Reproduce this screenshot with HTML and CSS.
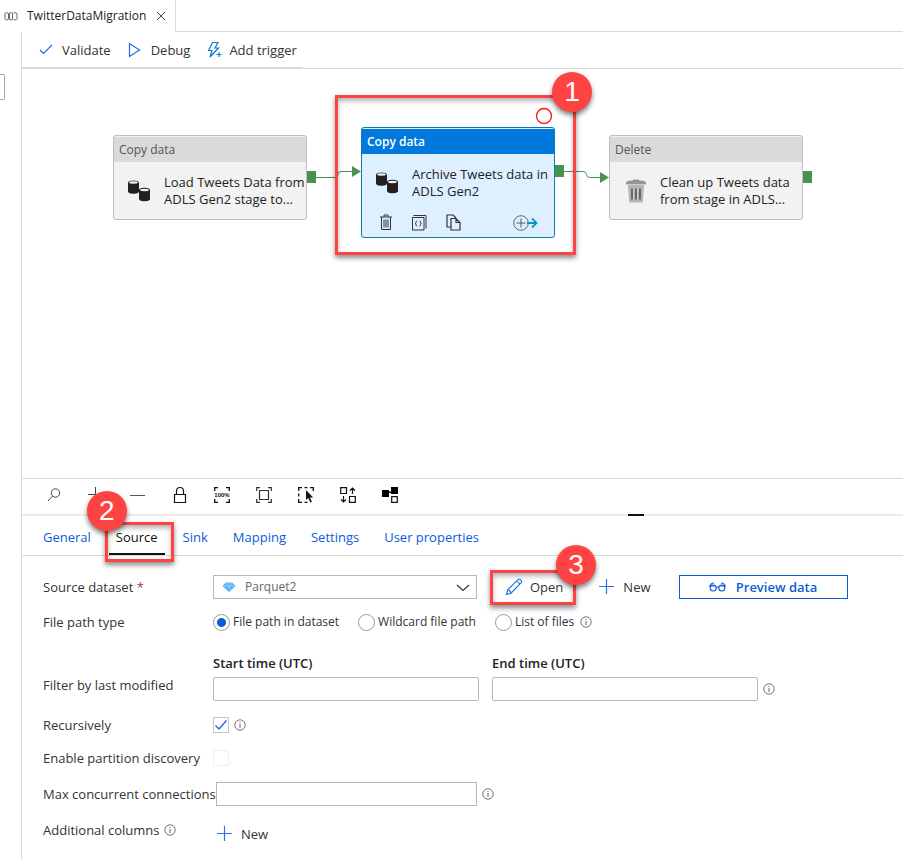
FILE: index.html
```html
<!DOCTYPE html>
<html lang="en">
<head>
<meta charset="utf-8">
<title>TwitterDataMigration</title>
<link rel="stylesheet" href="styles.css">
</head>
<body>
<svg class="defs" aria-hidden="true">
  <symbol id="info" viewBox="0 0 12 12"><circle cx="6" cy="6" r="5.2" fill="none" stroke="#666" stroke-width=".9"/><path d="M6 5v4M6 3v1" stroke="#666" stroke-width="1"/></symbol>
  <symbol id="plus" viewBox="0 0 16 16"><path d="M0 7.5h15M7.5 0v15" stroke="#2f74e0" stroke-width="1.2" fill="none"/></symbol>
  <symbol id="cylinders" viewBox="0 0 22 22">
    <g fill="#231f20"><path d="M0 2.500C0-.3 11-.3 11 2.500v9c0 3-11 3-11 0z"/></g>
    <ellipse cx="5.500" cy="2.500" rx="4.400" ry="1.200" fill="#eee"/>
    <path d="M11 10c0-3 11-3 11 0v9c0 3-11 3-11 0z" fill="#231f20"/>
    <ellipse cx="16.500" cy="10" rx="4.400" ry="1.200" fill="#eee"/>
  </symbol>
</svg>

<header class="tabbar">
  <div class="doc-tab">
    <svg width="14" height="9" viewBox="0 0 14 9" fill="none" stroke="#666"><rect x="1" y=".8" width="3.500" height="7" rx="1.200"/><rect x="5.500" y=".8" width="3" height="7" rx=".5"/><path d="M9.500.8h2q1.500 0 1.500 1.200v4.600q0 1.200-1.500 1.200h-2"/></svg>
    <span>TwitterDataMigration</span>
    <button class="close" aria-label="Close"><svg width="10" height="10" viewBox="0 0 10 10"><path d="M1 1l8 8M9 1L1 9" stroke="#444" fill="none"/></svg></button>
  </div>
</header>

<div class="workspace">
  <aside class="rail"><button class="rail-handle" aria-label="Expand"></button></aside>
  <main class="main">
    <div class="toolbar">
      <div class="toolbar-group">
        <button><svg width="14" height="14" viewBox="0 0 14 14"><path d="M1 7l3.500 3.500L13 2" stroke="#1f6be0" stroke-width="1.200" fill="none"/></svg>Validate</button>
        <button class="debug"><svg width="14" height="16" viewBox="0 0 14 16"><path d="M1.500 1.500v13L11.500 8z" stroke="#1f6be0" stroke-width="1.200" fill="none"/></svg>Debug</button>
        <button class="trigger"><svg width="16" height="18" viewBox="0 0 16 18" fill="none" stroke="#0f7ad8" stroke-width="1.200"><path d="M5.500 1.500h5.500L8 7h3.500L3 16l2-6.500H1.500zM12 11v5M9.500 13.500h5"/></svg>Add trigger</button>
      </div>
    </div>

    <section class="canvas" aria-label="Pipeline">
      <article class="node node-load">
        <h2>Copy data</h2>
        <div class="node-body"><svg width="22" height="22"><use href="#cylinders"/></svg><p>Load Tweets Data from<br>ADLS Gen2 stage to...</p></div>
      </article>
      <article class="node node-archive">
        <h2>Copy data</h2>
        <div class="node-body"><svg width="22" height="22"><use href="#cylinders"/></svg><p>Archive Tweets data in<br>ADLS Gen2</p></div>
        <div class="node-actions">
          <button aria-label="Delete"><svg width="14" height="17" viewBox="0 0 14 17" fill="none" stroke="#333"><path d="M1 3h12M5 3V1h4v2M2.500 3v12.500h9V3M5 5.500v8M7 5.500v8M9 5.500v8"/></svg></button>
          <button aria-label="Code"><svg width="15" height="17" viewBox="0 0 15 17" fill="none" stroke="#333"><path d="M.5 3.500h11.500v12.500H.5zM1.500 1.500h12.500v13" /><path d="M5 7q-1.200 0-1 1.500 0 1-.8 1 .8 0 .8 1-.2 1.500 1 1.500M7.500 7q1.200 0 1 1.500 0 1 .8 1-.8 0-.8 1 .2 1.500-1 1.500"/></svg></button>
          <button aria-label="Copy"><svg width="16" height="17" viewBox="0 0 16 17" fill="none" stroke="#333" stroke-width="1.200"><path d="M5 13H1V1h6l3 3M5 4.500h5l4 4V16H5zM10 4.500v4h4"/></svg></button>
          <button class="add-output" aria-label="Add output"><svg width="25" height="16" viewBox="0 0 25 16" fill="none"><circle cx="8" cy="8" r="7.300" stroke="#667"/><path d="M3.500 8h9M8 3.500v9" stroke="#556"/><path d="M14 8h9.500M19 3.500L23.500 8 19 12.500" stroke="#0795c8" stroke-width="1.800"/></svg></button>
        </div>
      </article>
      <article class="node node-delete">
        <h2>Delete</h2>
        <div class="node-body"><svg width="22" height="24" viewBox="0 0 22 24"><path d="M3 6h16l-1 16q0 1.500-2 1.500H6q-2 0-2-1.500z" fill="#b5b5b5"/><path d="M8 2.500V1h6v1.500M1.500 5V3.200L4 2h14l2.500 1.200V5z" fill="#9b9b9b" stroke="#888" stroke-width=".7"/><path d="M7 9.500v11M11 9.500v11M15 9.500v11" stroke="#666" stroke-width="2"/><path d="M8.500 9.500v11M12.500 9.500v11" stroke="#ddd" stroke-width=".7"/></svg><p>Clean up Tweets data<br>from stage in ADLS...</p></div>
      </article>
      <svg class="wires" width="800" height="200" viewBox="22 69 800 200">
        <g fill="#479151"><path d="M307 171h9v12h-9zM555 165h9v12h-9zM803 171h9v12h-9zM352 166l9 5.500-9 5.500zM600 172l9 5.500-9 5.500z"/></g>
        <path d="M316 177.500h19q3 0 3-3t3-3h11M564 171.500h19q3.500 0 3.500 3t3.500 3h10" fill="none" stroke="#479151"/>
        <circle cx="544" cy="116" r="7.500" fill="#fff" stroke="#f01818" stroke-width="1.300"/>
      </svg>
      <div class="callout callout-node"><span class="badge">1</span></div>
    </section>

    <div class="zoombar">
      <button aria-label="Search"><svg width="16" height="16" viewBox="0 0 16 16" fill="none" stroke="#444"><circle cx="9.500" cy="6" r="4.200"/><path d="M6.500 9L2 14"/></svg></button>
      <button aria-label="Zoom in"><svg width="16" height="16" viewBox="0 0 16 16"><path d="M0 7.500h15M7.500 0v15" stroke="#444"/></svg></button>
      <button aria-label="Zoom out"><svg width="16" height="16" viewBox="0 0 16 16"><path d="M0 8.500h15" stroke="#555"/></svg></button>
      <button aria-label="Lock"><svg width="16" height="18" viewBox="0 0 16 18" fill="none" stroke="#111" stroke-width="1.200"><path d="M2.500 8.500h11v8h-11zM4.500 8.500V5.200Q4.500 1.500 8 1.500t3.500 3.700v3.300"/></svg></button>
      <button aria-label="Zoom to 100%"><svg width="16" height="16" viewBox="0 0 16 16" fill="none" stroke="#111" stroke-width="1.300"><path d="M.7 4V.7H4M12 .7h3.300V4M.7 12v3.300H4M12 15.300h3.300V12"/><text x="8" y="10" text-anchor="middle" class="pct">100%</text></svg></button>
      <button aria-label="Fit to screen"><svg width="16" height="16" viewBox="0 0 16 16" fill="none" stroke="#333" stroke-width="1.200"><path d="M.7 4V.7H4M12 .7h3.300V4M.7 12v3.300H4M12 15.300h3.300V12M3.500 3.500h9v9h-9z"/></svg></button>
      <button aria-label="Select"><svg width="16" height="16" viewBox="0 0 16 16" fill="none" stroke="#111" stroke-width="1.300"><path d="M.7 4V.7H4M6.500.7h3M12 .7h3.300V4M.7 6.500v3M.7 12v3.300H4M6.500 15.300h3"/><path d="M8 3v10l2.300-2 2 4.500 1.600-.7-2-4.300h3.300z" fill="#111" stroke="none"/></svg></button>
      <button aria-label="Auto align"><svg width="16" height="16" viewBox="0 0 16 16" fill="none" stroke="#111" stroke-width="1.200"><path d="M.7.700h5.800v5.800H.7zM9.500 9.500h5.800v5.800H9.500zM12.500 7V1M10 3.500L12.500 1 15 3.500M3.500 9v6M1 12.500L3.500 15 6 12.500"/></svg></button>
      <button aria-label="Lineage"><svg width="16" height="16" viewBox="0 0 16 16"><path d="M0 3h7v7H0zM9 0h7v7H9zM6 4.500h4v1.500H6z"/><path d="M9.700 9.700h5.600v5.600H9.700z" fill="none" stroke="#111" stroke-width="1.200"/></svg></button>
      <span class="panel-handle"></span>
    </div>

    <nav class="tabs">
      <a href="#">General</a>
      <a href="#" class="active">Source<span class="callout callout-tab"></span><span class="badge badge-tab">2</span></a>
      <a href="#">Sink</a>
      <a href="#">Mapping</a>
      <a href="#">Settings</a>
      <a href="#">User properties</a>
    </nav>

    <form class="form">
      <div class="row">
        <label for="dataset">Source dataset <span class="req">*</span></label>
        <div class="select-box">
          <svg class="gem" width="14" height="12" viewBox="0 0 14 12"><path d="M4 1.500h6L13.500 5 7 11 .5 5z" fill="#55aef2"/><path d="M0 5h14M4 1.500L9 9.500M10 1.500L5 9.500M2 6.500L7 1.500l5 5" stroke="#a8d8fb" stroke-width=".6" fill="none"/></svg>
          <select id="dataset"><option>Parquet2</option></select>
          <svg class="chevron" width="14" height="8" viewBox="0 0 14 8"><path d="M1 1l6 5.500L13 1" fill="none" stroke="#333" stroke-width="1.200"/></svg>
        </div>
        <button type="button" class="link-btn open"><svg width="18" height="18" viewBox="0 0 18 18" fill="none" stroke="#1f6be0" stroke-width="1.100"><path d="M1.500 16.500l1.200-4.700L13 1.700q1.500-1 2.800.2 1.400 1.400.4 2.800L6 15.200zM2.700 11.800q2.800.6 3.300 3.400M11.500 3.200q2.500.8 3.200 3.200"/></svg>Open<span class="callout callout-open"><span class="badge">3</span></span></button>
        <button type="button" class="link-btn new"><svg width="16" height="16"><use href="#plus"/></svg>New</button>
        <button type="button" class="preview"><svg width="17" height="10" viewBox="0 0 17 10" fill="none" stroke="#0b5cd7" stroke-width="1.100"><circle cx="4.200" cy="6" r="3"/><circle cx="12.800" cy="6" r="3"/><path d="M7.200 5.500q1.300-1 2.600 0M1 4.500Q1.500 1 5 1M16 4.500Q15.500 1 12 1M0 4h7M10 4h7"/></svg>Preview data</button>
      </div>
      <div class="row row-radios">
        <span class="label">File path type</span>
        <label class="radio"><input type="radio" name="path" checked>File path in dataset</label>
        <label class="radio"><input type="radio" name="path">Wildcard file path</label>
        <label class="radio"><input type="radio" name="path">List of files</label>
        <svg class="info" width="12" height="12"><use href="#info"/></svg>
      </div>
      <div class="row row-dates">
        <span class="label">Filter by last modified</span>
        <div class="field"><label for="start">Start time (UTC)</label><input id="start" type="text"></div>
        <div class="field"><label for="end">End time (UTC)</label><input id="end" type="text"></div>
        <svg class="info" width="12" height="12"><use href="#info"/></svg>
      </div>
      <div class="row row-check">
        <label for="recursive">Recursively</label>
        <span class="check"><input id="recursive" type="checkbox" checked><svg width="14" height="12" viewBox="0 0 14 12"><path d="M1.500 6.500l3.500 3.500 7.500-8.500" stroke="#1f6be0" stroke-width="1.400" fill="none"/></svg></span>
        <svg class="info" width="12" height="12"><use href="#info"/></svg>
      </div>
      <div class="row row-check">
        <label for="partition">Enable partition discovery</label>
        <span class="check"><input id="partition" type="checkbox" disabled></span>
      </div>
      <div class="row row-max">
        <label for="max">Max concurrent connections</label>
        <input id="max" type="text">
        <svg class="info" width="12" height="12"><use href="#info"/></svg>
      </div>
      <div class="row row-columns">
        <span class="label">Additional columns <svg class="info" width="12" height="12"><use href="#info"/></svg></span>
        <button type="button" class="link-btn"><svg width="16" height="16"><use href="#plus"/></svg>New</button>
      </div>
    </form>
  </main>
</div>
</body>
</html>
```
FILE: styles.css
```css
* { box-sizing: border-box; }
body {
  margin: 0;
  min-height: 100vh;
  display: flex;
  flex-direction: column;
  background: #fff;
  color: #333;
  font: 13px/18px "Open Sans", "Noto Sans", sans-serif;
}
button, input, select { font: inherit; color: inherit; }
button { background: none; border: 0; padding: 0; margin: 0; }
svg { flex: none; display: block; }
.defs { position: absolute; width: 0; height: 0; }

.tabbar { display: flex; height: 32px; }
.tabbar::after { content: ""; flex: 1; border-bottom: 1px solid #d9d9d9; }
.doc-tab {
  display: flex;
  align-items: center;
  width: 176px;
  padding: 0 9px 0 4px;
  border-right: 1px solid #d9d9d9;
  font-size: 12px;
  color: #222;
}
.doc-tab span { margin-left: 9px; white-space: nowrap; }
.close { margin-left: auto; }

.workspace { display: flex; flex: 1; }
.rail { width: 22px; border-right: 1px solid #d9d9d9; padding-top: 42px; }
.rail-handle {
  display: block;
  width: 5px;
  height: 26px;
  border: 1px solid #aaa;
  border-left: 0;
  border-radius: 0 2px 2px 0;
}
.main { flex: 1; min-width: 0; display: flex; flex-direction: column; }

.toolbar { height: 37px; border-bottom: 1px solid #d9d9d9; display: flex; }
.toolbar-group {
  display: flex;
  padding: 0 6px 0 17px;
  border-bottom: 1px solid #d9d9d9;
}
.toolbar button { display: flex; align-items: center; gap: 9px; }
.toolbar .debug { margin-left: 17px; }
.toolbar .trigger { margin-left: 17px; gap: 6px; }

.canvas { position: relative; min-height: 409px; }
.node {
  position: absolute;
  width: 194px;
  height: 85px;
  border: 1px solid #bdbdbd;
  border-radius: 3px;
  padding-top: 1px;
  background: #f2f2f2;
}
.node-load { left: 91px; top: 66px; }
.node-archive { left: 339px; top: 58px; height: 111px; border-color: #0b7fa8; background: #def0ff; }
.node-delete { left: 587px; top: 66px; }
.node h2 {
  margin: 0;
  padding: 0 5px;
  font-size: 12px;
  font-weight: 400;
  line-height: 25px;
  background: #dadada;
  color: #555;
}
.node-archive h2 { background: #0078dc; color: #fff; font-weight: 600; }
.node-body { display: flex; align-items: center; height: 58px; padding-left: 14px; gap: 14px; }
.node-delete .node-body { padding-left: 15px; gap: 13px; }
.node-body p { margin: 0; line-height: 17px; color: #222; white-space: nowrap; }
.node-actions { display: flex; align-items: center; gap: 19px; padding: 2px 16px 0 17px; }
.add-output { margin-left: auto; }
.wires { position: absolute; left: 0; top: 0; }

.callout {
  position: absolute;
  border: 3px solid #ff4343;
  box-shadow: 0 3px 5px rgba(0, 0, 0, .45), inset 0 3px 5px rgba(0, 0, 0, .3);
  pointer-events: none;
}
.badge {
  position: absolute;
  width: 40px;
  height: 40px;
  border-radius: 50%;
  background: #ff4343;
  box-shadow: 0 3px 5px rgba(0, 0, 0, .5);
  color: #fff;
  font: 28px/40px "Liberation Sans", sans-serif;
  text-align: center;
}
.callout .badge { right: -19px; top: -26px; }
.callout-node { left: 313px; top: 26px; width: 241px; height: 160px; }
.callout-open .badge { right: -23px; top: -28px; }

.zoombar {
  position: relative;
  display: flex;
  height: 38px;
  padding: 0 0 4px 11px;
  border-top: 1px solid #d9d9d9;
  border-bottom: 2px solid #ebebeb;
}
.zoombar button { width: 42px; display: flex; align-items: center; justify-content: center; }
.pct { font: bold 6px "Liberation Sans", sans-serif; fill: #111; stroke: none; }
.panel-handle {
  position: absolute;
  left: 606px;
  bottom: -2px;
  width: 16px;
  height: 2px;
  background: #111;
}

.tabs { display: flex; gap: 11px; height: 40px; padding: 0 14px; border-bottom: 1px solid #d9d9d9; }
.tabs a {
  position: relative;
  padding: 0 7px;
  line-height: 42px;
  height: 39px;
  color: #0b5cd7;
  text-decoration: none;
  white-space: nowrap;
}
.tabs .active { color: #111; border-bottom: 2px solid #111; }
.callout-tab { left: -4px; top: 6px; width: 69px; height: 40px; }
.badge-tab { left: -22px; top: -25px; }

.form { flex: 1; padding: 19px 21px 0; }
.row { display: flex; align-items: center; min-height: 24px; }
.row > label:first-child, .label { flex: 0 0 170px; white-space: nowrap; }
.req { color: #c4262e; }
.select-box { position: relative; flex: 0 1 264px; }
.select-box select {
  appearance: none;
  display: block;
  width: 100%;
  height: 24px;
  padding: 0 31px;
  border: 1px solid #b8b8b8;
  border-radius: 0;
  background: #fff;
  color: #666;
  font-size: 12px;
}
.gem, .chevron { position: absolute; pointer-events: none; }
.gem { left: 9px; top: 6px; }
.chevron { right: 7px; top: 9px; }
.link-btn { position: relative; display: flex; align-items: center; gap: 8px; }
.open { margin-left: 28px; gap: 7px; }
.callout-open { left: -15px; top: -8px; width: 86px; height: 35px; }
.new { margin-left: 36px; }
.preview {
  display: flex;
  align-items: center;
  justify-content: center;
  gap: 10px;
  width: 169px;
  height: 24px;
  margin-left: 28px;
  border: 1px solid #0b5cd7;
  color: #0b5cd7;
  font-weight: 600;
}
.row-radios { margin-top: 11px; }
.radio { display: flex; align-items: center; gap: 3px; margin-right: 19px; font-size: 12px; white-space: nowrap; }
.radio input {
  appearance: none;
  width: 17px;
  height: 17px;
  margin: 0;
  border: 1px solid #999;
  border-radius: 50%;
}
.radio input:checked { background: radial-gradient(#0b5cd7 4px, transparent 5px); }
.radio:last-of-type { margin-right: 6px; }
.row-dates { margin-top: 19px; align-items: flex-end; }
.row-dates .label { padding-bottom: 7px; }
.field { flex: 0 1 266px; margin-right: 13px; }
.field + .field { margin-right: 5px; }
.field label { display: block; line-height: 20px; margin-bottom: 4px; font-weight: 600; color: #222; }
input[type="text"] {
  display: block;
  width: 100%;
  height: 24px;
  border: 1px solid #b8b8b8;
  border-radius: 2px;
}
.row-dates .info { margin-bottom: 6px; }
.row-check { margin-top: 9px; }
.row-dates + .row-check { margin-top: 12px; }
.check { position: relative; margin-right: 5px; }
.check input { appearance: none; display: block; width: 16px; height: 16px; margin: 0; border: 1px solid #c4c4c4; }
.check input:disabled { border-color: #eee; }
.check svg { position: absolute; left: 1px; top: 2px; pointer-events: none; }
.row-max { margin-top: 12px; }
.row-max input[type="text"] { flex: 0 1 261px; margin-right: 5px; border-radius: 0; }
.row-columns { margin-top: 15px; }
.row-columns .label { display: flex; align-items: center; gap: 4px; padding-bottom: 8px; }
.row-columns .link-btn { margin-left: 4px; }
```
